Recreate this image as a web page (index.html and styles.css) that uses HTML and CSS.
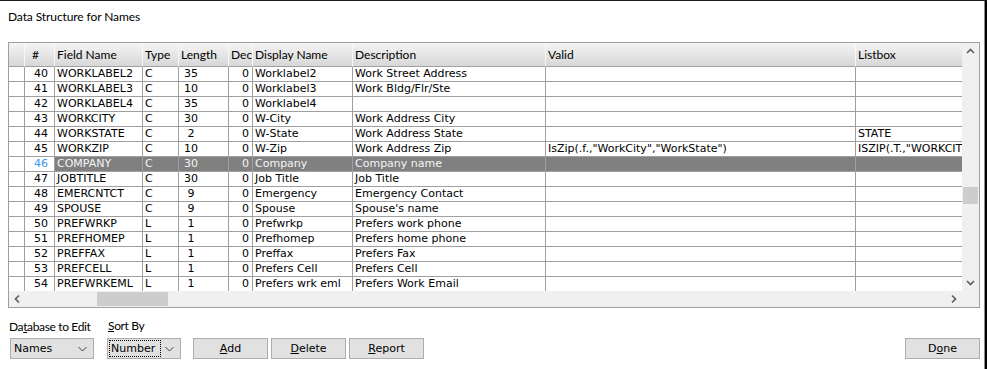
FILE: index.html
```html
<!DOCTYPE html>
<html lang="en">
  <head>
    <meta charset="UTF-8" />
    <title>Data Structure for Names</title>
    <link rel="stylesheet" href="styles.css">
  </head>

  <body>
    <div class="window">
      <div class="title">Data Structure for Names</div>

      <div class="grid">
        <div class="viewport">
          <div class="row head">
            <div class="cell"></div>
            <div class="cell h-num">#</div>
            <div class="cell">Field Name</div>
            <div class="cell">Type</div>
            <div class="cell">Length</div>
            <div class="cell">Dec</div>
            <div class="cell">Display Name</div>
            <div class="cell">Description</div>
            <div class="cell">Valid</div>
            <div class="cell">Listbox</div>
          </div>

          <div class="row">
            <div class="cell"></div><div class="cell num">40</div><div class="cell">WORKLABEL2</div><div class="cell">C</div>
            <div class="cell len"><span>35</span></div><div class="cell dec">0</div><div class="cell">Worklabel2</div>
            <div class="cell">Work Street Address</div><div class="cell"></div><div class="cell"></div>
          </div>
          <div class="row">
            <div class="cell"></div><div class="cell num">41</div><div class="cell">WORKLABEL3</div><div class="cell">C</div>
            <div class="cell len"><span>10</span></div><div class="cell dec">0</div><div class="cell">Worklabel3</div>
            <div class="cell">Work Bldg/Flr/Ste</div><div class="cell"></div><div class="cell"></div>
          </div>
          <div class="row">
            <div class="cell"></div><div class="cell num">42</div><div class="cell">WORKLABEL4</div><div class="cell">C</div>
            <div class="cell len"><span>35</span></div><div class="cell dec">0</div><div class="cell">Worklabel4</div>
            <div class="cell"></div><div class="cell"></div><div class="cell"></div>
          </div>
          <div class="row">
            <div class="cell"></div><div class="cell num">43</div><div class="cell">WORKCITY</div><div class="cell">C</div>
            <div class="cell len"><span>30</span></div><div class="cell dec">0</div><div class="cell">W-City</div>
            <div class="cell">Work Address City</div><div class="cell"></div><div class="cell"></div>
          </div>
          <div class="row">
            <div class="cell"></div><div class="cell num">44</div><div class="cell">WORKSTATE</div><div class="cell">C</div>
            <div class="cell len"><span>2</span></div><div class="cell dec">0</div><div class="cell">W-State</div>
            <div class="cell">Work Address State</div><div class="cell"></div><div class="cell">STATE</div>
          </div>
          <div class="row">
            <div class="cell"></div><div class="cell num">45</div><div class="cell">WORKZIP</div><div class="cell">C</div>
            <div class="cell len"><span>10</span></div><div class="cell dec">0</div><div class="cell">W-Zip</div>
            <div class="cell">Work Address Zip</div><div class="cell">IsZip(.f.,"WorkCity","WorkState")</div><div class="cell">ISZIP(.T.,"WORKCITY","WORKSTATE")</div>
          </div>
          <div class="row selected">
            <div class="cell"></div><div class="cell num">46</div><div class="cell">COMPANY</div><div class="cell">C</div>
            <div class="cell len"><span>30</span></div><div class="cell dec">0</div><div class="cell">Company</div>
            <div class="cell">Company name</div><div class="cell"></div><div class="cell"></div>
          </div>
          <div class="row">
            <div class="cell"></div><div class="cell num">47</div><div class="cell">JOBTITLE</div><div class="cell">C</div>
            <div class="cell len"><span>30</span></div><div class="cell dec">0</div><div class="cell">Job Title</div>
            <div class="cell">Job Title</div><div class="cell"></div><div class="cell"></div>
          </div>
          <div class="row">
            <div class="cell"></div><div class="cell num">48</div><div class="cell">EMERCNTCT</div><div class="cell">C</div>
            <div class="cell len"><span>9</span></div><div class="cell dec">0</div><div class="cell">Emergency</div>
            <div class="cell">Emergency Contact</div><div class="cell"></div><div class="cell"></div>
          </div>
          <div class="row">
            <div class="cell"></div><div class="cell num">49</div><div class="cell">SPOUSE</div><div class="cell">C</div>
            <div class="cell len"><span>9</span></div><div class="cell dec">0</div><div class="cell">Spouse</div>
            <div class="cell">Spouse's name</div><div class="cell"></div><div class="cell"></div>
          </div>
          <div class="row">
            <div class="cell"></div><div class="cell num">50</div><div class="cell">PREFWRKP</div><div class="cell">L</div>
            <div class="cell len"><span>1</span></div><div class="cell dec">0</div><div class="cell">Prefwrkp</div>
            <div class="cell">Prefers work phone</div><div class="cell"></div><div class="cell"></div>
          </div>
          <div class="row">
            <div class="cell"></div><div class="cell num">51</div><div class="cell">PREFHOMEP</div><div class="cell">L</div>
            <div class="cell len"><span>1</span></div><div class="cell dec">0</div><div class="cell">Prefhomep</div>
            <div class="cell">Prefers home phone</div><div class="cell"></div><div class="cell"></div>
          </div>
          <div class="row">
            <div class="cell"></div><div class="cell num">52</div><div class="cell">PREFFAX</div><div class="cell">L</div>
            <div class="cell len"><span>1</span></div><div class="cell dec">0</div><div class="cell">Preffax</div>
            <div class="cell">Prefers Fax</div><div class="cell"></div><div class="cell"></div>
          </div>
          <div class="row">
            <div class="cell"></div><div class="cell num">53</div><div class="cell">PREFCELL</div><div class="cell">L</div>
            <div class="cell len"><span>1</span></div><div class="cell dec">0</div><div class="cell">Prefers Cell</div>
            <div class="cell">Prefers Cell</div><div class="cell"></div><div class="cell"></div>
          </div>
          <div class="row">
            <div class="cell"></div><div class="cell num">54</div><div class="cell">PREFWRKEML</div><div class="cell">L</div>
            <div class="cell len"><span>1</span></div><div class="cell dec">0</div><div class="cell">Prefers wrk eml</div>
            <div class="cell">Prefers Work Email</div><div class="cell"></div><div class="cell"></div>
          </div>
        </div>

        <div class="vscroll">
          <svg class="arrow" width="17" height="17" viewBox="0 0 17 17"><polyline points="5,10 8.5,6.5 12,10" /></svg>
          <div class="vtrack"><div class="vthumb"></div></div>
          <svg class="arrow" width="17" height="17" viewBox="0 0 17 17"><polyline points="5,7 8.5,10.5 12,7" /></svg>
        </div>

        <div class="hscroll">
          <svg class="arrow" width="17" height="16" viewBox="0 0 17 16"><polyline points="10,4.5 6.5,8 10,11.5" /></svg>
          <div class="htrack"><div class="hthumb"></div></div>
          <svg class="arrow" width="17" height="16" viewBox="0 0 17 16"><polyline points="7,4.5 10.5,8 7,11.5" /></svg>
        </div>
        <div class="corner"></div>
      </div>

      <div class="controls">
        <div class="field field-db">
          <div class="label">Da<u>t</u>abase to Edit</div>
          <div class="combo">
            <span>Names</span>
            <svg width="9" height="6" viewBox="0 0 9 6"><polyline points="0.5,1 4.5,5 8.5,1" /></svg>
          </div>
        </div>
        <div class="field field-sort">
          <div class="label label-sort"><u>S</u>ort By</div>
          <div class="combo">
            <span class="focus">Number</span>
            <svg width="9" height="6" viewBox="0 0 9 6"><polyline points="0.5,1 4.5,5 8.5,1" /></svg>
          </div>
        </div>
        <button class="btn btn-add"><u>A</u>dd</button>
        <button class="btn"><u>D</u>elete</button>
        <button class="btn"><u>R</u>eport</button>
        <button class="btn btn-done">D<u>o</u>ne</button>
      </div>
    </div>
  </body>
</html>
```

FILE: styles.css
```css
body {
  margin: 0;
  background-color: #ffffff;
}

.window {
  box-sizing: border-box;
  width: 987px;
  height: 369px;
  border-top: 1px solid #1a1a1a;
  border-right: 2px solid #000000;
  box-shadow: inset -1px 0 0 #8c8c8c;
  font-family: Lato, "Open Sans", sans-serif;
  font-size: 12px;
  color: #000000;
}

.title {
  padding: 8px 0 0 8px;
  line-height: 15px;
  letter-spacing: -0.1px;
}

/* grid */
.grid {
  display: grid;
  grid-template-columns: 953px 17px;
  grid-template-rows: 248px 16px;
  width: 970px;
  margin: 18px 0 0 8px;
  border: 1px solid #a0a0a0;
}

.viewport {
  overflow: hidden;
}

.row {
  display: grid;
  grid-template-columns: 16px 30px 88px 36px 50px 24px 100px 193px 310px 160px;
  width: 1007px;
  height: 15px;
  font-family: "DejaVu Sans", Verdana, sans-serif;
  font-size: 11px;
}

.cell {
  box-sizing: border-box;
  padding: 0 2px;
  border-right: 1px solid #a0a0a0;
  border-bottom: 1px solid #a0a0a0;
  line-height: 14px;
  white-space: nowrap;
  overflow: hidden;
}

.num {
  padding-right: 6px;
  text-align: right;
}

.len {
  padding-left: 5px;
}

.len span {
  display: inline-block;
  width: 14px;
  text-align: center;
}

.dec {
  padding-right: 3px;
  text-align: right;
}

.head {
  height: 24px;
  background: linear-gradient(#f4f4f4, #d6d6d6);
  font-family: Lato, "Open Sans", sans-serif;
  font-size: 12px;
}

.head .cell {
  border-right-color: #f8f8f8;
  border-bottom-color: #a0a0a0;
  line-height: 23px;
}

.head .h-num {
  padding-left: 7px;
}

.selected .cell {
  background-color: #808080;
  color: #f4f4f4;
}

.selected .cell:nth-child(1),
.selected .cell:nth-child(2) {
  background-color: #ffffff;
}

.selected .num {
  color: #3c94ec;
}

/* scrollbars */
.vscroll,
.hscroll,
.corner {
  background-color: #f0f0f0;
}

.vscroll {
  display: flex;
  flex-direction: column;
}

.hscroll {
  display: flex;
}

.arrow {
  flex: none;
}

.arrow polyline {
  fill: none;
  stroke: #606060;
  stroke-width: 1.7;
}

.vtrack {
  flex: 1;
  padding: 127px 1px 0 1px;
}

.vthumb {
  height: 17px;
  background-color: #cdcdcd;
}

.htrack {
  flex: 1;
  padding: 1px 0 1px 71px;
}

.hthumb {
  width: 71px;
  height: 14px;
  background-color: #cdcdcd;
}

/* bottom controls */
.controls {
  display: flex;
  align-items: flex-end;
  padding: 11px 5px 0 10px;
}

.field-db {
  width: 84px;
  margin-right: 13px;
}

.field-sort {
  width: 74px;
  margin-right: 12px;
}

.label {
  margin: 0 0 4px -1px;
  line-height: 15px;
  letter-spacing: -0.35px;
  white-space: nowrap;
}

.label-sort {
  position: relative;
  top: -1px;
  margin-left: 1px;
}

.combo {
  box-sizing: border-box;
  display: flex;
  align-items: center;
  justify-content: space-between;
  height: 21px;
  padding: 0 6px 0 1px;
  border: 1px solid #adadad;
  background-color: #e1e1e1;
  font-family: "DejaVu Sans", Verdana, sans-serif;
  font-size: 11px;
}

.combo span {
  padding: 1px 1px;
  border: 1px dotted transparent;
}

.combo .focus {
  width: 48px;
  border-color: #000000;
}

.combo polyline {
  fill: none;
  stroke: #404040;
  stroke-width: 1;
}

.btn {
  box-sizing: border-box;
  width: 75px;
  height: 21px;
  margin-right: 3px;
  padding: 0;
  border: 1px solid #adadad;
  background-color: #e1e1e1;
  font-family: "DejaVu Sans", Verdana, sans-serif;
  font-size: 11px;
  color: #000000;
}

.btn-done {
  margin-left: auto;
  margin-right: 0;
}
```
